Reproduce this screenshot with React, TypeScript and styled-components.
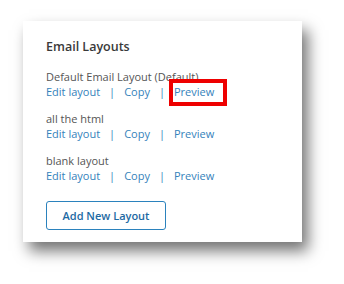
import React from "react";
import styled, { createGlobalStyle } from "styled-components";

const Global = createGlobalStyle`
  html, body { margin: 0; padding: 0; background: #ffffff; }
  body { font-family: "Open Sans", "Noto Sans", sans-serif; }
`;

const Page = styled.div`
  width: 344px;
  height: 284px;
  padding: 21px 0 0 23px;
  box-sizing: border-box;
`;

const Card = styled.div`
  width: 279px;
  height: 221px;
  box-sizing: border-box;
  background: #ffffff;
  padding: 17px 0 0 23px;
  box-shadow: 6px 9px 14px rgba(0, 0, 0, 0.55);
  display: flex;
  flex-direction: column;
`;

const Heading = styled.h2`
  margin: 0 0 13px 0;
  font-size: 12.5px;
  line-height: 18px;
  font-weight: 600;
  color: #3a3a3a;
`;

const Group = styled.div`
  margin-bottom: 12px;
  display: flex;
  flex-direction: column;
`;

const Name = styled.div`
  font-size: 11px;
  line-height: 15px;
  color: #555;
`;

const Links = styled.div`
  display: flex;
  align-items: center;
  font-size: 11px;
  line-height: 15px;
  color: #3582bb;
`;

const Link = styled.span`
  position: relative;
  color: #3582bb;
`;

const Highlight = styled.span`
  position: absolute;
  left: -5px;
  top: -5px;
  width: 58px;
  height: 27px;
  box-sizing: border-box;
  border: 4px solid #ee0000;
`;

const Sep = styled.span`
  margin: 0 9px;
  color: #3582bb;
`;

const Button = styled.button`
  margin-top: 6px;
  width: 120px;
  height: 29px;
  box-sizing: border-box;
  border: 1.5px solid #2b82bd;
  border-radius: 3px;
  background: #ffffff;
  color: #1d6aa3;
  font-family: "Open Sans", "Noto Sans", sans-serif;
  font-size: 11px;
  font-weight: 600;
  padding: 0;
`;

const layouts = [
  { name: "Default Email Layout (Default)", highlight: true },
  { name: "all the html", highlight: false },
  { name: "blank layout", highlight: false },
];

export default function App() {
  return (
    <>
      <Global />
      <Page>
        <Card>
          <Heading>Email Layouts</Heading>
          {layouts.map((l) => (
            <Group key={l.name}>
              <Name>{l.name}</Name>
              <Links>
                <Link>Edit layout</Link>
                <Sep>|</Sep>
                <Link>Copy</Link>
                <Sep>|</Sep>
                <Link>
                  Preview
                  {l.highlight && <Highlight />}
                </Link>
              </Links>
            </Group>
          ))}
          <Button>Add New Layout</Button>
        </Card>
      </Page>
    </>
  );
}
